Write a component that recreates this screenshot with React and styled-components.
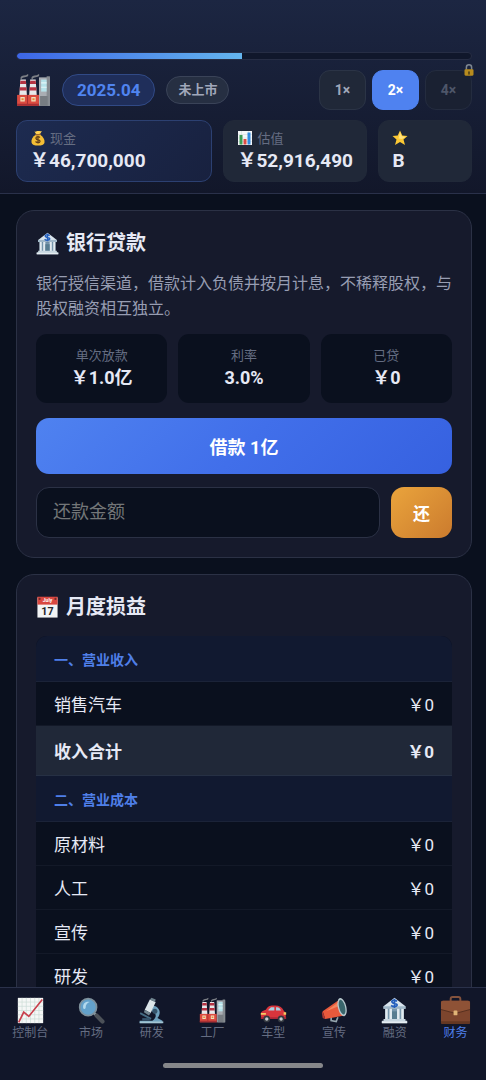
import React, { useState } from "react";
import styled, { createGlobalStyle } from "styled-components";

const GlobalStyle = createGlobalStyle`
  * {
    box-sizing: border-box;
  }

  body {
    margin: 0;
    background: #0a101e;
    color: #e6e9f5;
    font-family: Roboto, "Noto Sans CJK SC", sans-serif;
  }

  button, input {
    font-family: inherit;
  }

  svg {
    display: block;
    flex: none;
  }
`;
const Screen = styled.div`
  display: flex;
  flex-direction: column;
  height: 100vh;
  overflow: hidden;
`;
const Header = styled.header`
  flex: none;
  padding: 52px 14px 11px 16px;
  background: linear-gradient(180deg, #1c2642 0%, #12172a 100%);
  border-bottom: 1px solid #2a314a;
`;
const Progress = styled.div`
  height: 8px;
  border: 1px solid #262d44;
  border-radius: 4px;
  background: #10172b;
  overflow: hidden;
`;
const ProgressFill = styled.div`
  height: 100%;
  border-radius: 3px 0 0 3px;
  background: linear-gradient(90deg, #3d66e6, #64b5ee);
`;
const TopRow = styled.div`
  display: flex;
  align-items: center;
  gap: 11px;
  margin: 10px 0;
`;
const DatePill = styled.span`
  height: 32px;
  padding: 0 14px;
  line-height: 30px;
  border: 1px solid #314a86;
  border-radius: 16px;
  background: #1f2e5a;
  color: #5084f0;
  font-size: 17px;
  font-weight: 700;
`;
const StatusPill = styled.span`
  height: 28px;
  padding: 0 11px;
  line-height: 26px;
  border: 1px solid #3a4358;
  border-radius: 14px;
  background: #262f42;
  color: #a0a7ba;
  font-size: 13px;
  font-weight: 700;
`;
const Speeds = styled.div`
  display: flex;
  gap: 6px;
  margin-left: auto;
`;
const SpeedButton = styled.button`
  position: relative;
  width: 47px;
  height: 40px;
  padding: 0;
  border: 1px solid ${(p) => (p.$active ? "#4f82f0" : "#2b3446")};
  border-radius: 11px;
  background: ${(p) => (p.$active ? "#4f82f0" : "#202838")};
  color: ${(p) => (p.$active ? "#fff" : "#a0a7ba")};
  font-size: 14px;
  font-weight: 700;

  &:disabled {
    border-color: #242c3f;
    background: #1a2132;
    color: #4e5669;
  }
`;
const LockBadge = styled.span`
  position: absolute;
  top: -7px;
  right: -4px;
`;
const Assets = styled.div`
  display: grid;
  grid-template-columns: 210fr 154fr 100fr;
  gap: 11px;
`;
const Asset = styled.div`
  min-width: 0;
  height: 62px;
  padding: 6px 13px;
  border: 1px solid ${(p) => (p.$main ? "#2c4071" : "#212939")};
  border-radius: 11px;
  background: ${(p) => (p.$main ? "linear-gradient(135deg, #1d2b50, #18213f)" : "#202838")};
  white-space: nowrap;
`;
const AssetLabel = styled.div`
  display: flex;
  align-items: center;
  gap: 4px;
  height: 21px;
  color: #656d82;
  font-size: 13px;
`;
const AssetValue = styled.div`
  line-height: 26px;
  font-size: 19px;
  font-weight: 700;
`;
const Main = styled.main`
  flex: 1;
  min-height: 0;
  padding: 16px 14px 0 16px;
  overflow: hidden;
`;
const Card = styled.section`
  margin-bottom: 16px;
  padding: 19px;
  border: 1px solid #2b3145;
  border-radius: 18px;
  background: #161a2c;
`;
const CardTitle = styled.h2`
  display: flex;
  align-items: center;
  gap: 7px;
  margin: 0 0 15px;
  line-height: 26px;
  font-size: 20px;
  font-weight: 700;
`;
const Description = styled.p`
  margin: 0 0 13px;
  line-height: 25px;
  font-size: 16px;
  color: #979db2;
`;
const Stats = styled.div`
  display: grid;
  grid-template-columns: repeat(3, 1fr);
  gap: 11px;
  margin-bottom: 15px;
`;
const Stat = styled.div`
  padding: 12px 8px 13px;
  border-radius: 11px;
  background: #0a101e;
  text-align: center;
`;
const StatLabel = styled.div`
  line-height: 20px;
  font-size: 13px;
  color: #656d82;
`;
const StatValue = styled.div`
  line-height: 24px;
  font-size: 18px;
  font-weight: 700;
`;
const BorrowButton = styled.button`
  display: block;
  width: 100%;
  height: 56px;
  margin-bottom: 13px;
  border: 0;
  border-radius: 13px;
  background: linear-gradient(135deg, #4f82f0 0%, #416fea 50%, #3661e0 100%);
  color: #fff;
  font-size: 18px;
  font-weight: 700;
`;
const RepayRow = styled.form`
  display: flex;
  gap: 11px;
`;
const AmountInput = styled.input`
  flex: 1;
  min-width: 0;
  height: 51px;
  padding: 0 16px 2px;
  border: 1px solid #2b3145;
  border-radius: 13px;
  background: #0a101e;
  color: #e6e9f5;
  font-size: 18px;

  &::placeholder {
    color: #737678;
    opacity: 1;
  }
`;
const RepayButton = styled.button`
  width: 61px;
  height: 51px;
  padding: 0;
  border: 0;
  border-radius: 13px;
  background: linear-gradient(135deg, #eaa43c, #cb7b2e);
  color: #fff;
  font-size: 17px;
  font-weight: 700;
`;
const Report = styled.table`
  width: 100%;
  margin-top: 16px;
  border-spacing: 0;
  border-radius: 11px;
  background: #0a101e;
  overflow: hidden;
`;
const SectionHead = styled.th`
  height: 46px;
  padding: 0 18px;
  border-bottom: 1px solid #1b2338;
  background: #111930;
  color: #4f7fe8;
  font-size: 14px;
  font-weight: 700;
  text-align: left;
`;
const Line = styled.tr`
  background: ${(p) => (p.$total ? "#202838" : "#0a101e")};

  th, td {
    height: ${(p) => (p.$total ? "50px" : "44px")};
    padding: 0 18px;
    border-bottom: 1px solid ${(p) => (p.$total ? "#263044" : "#131928")};
    font-size: 17px;
    font-weight: ${(p) => (p.$total ? 700 : 400)};
    text-align: left;
  }

  td {
    text-align: right;
  }
`;
const Nav = styled.nav`
  flex: none;
  height: 93px;
  padding: 7px 0 11px;
  border-top: 1px solid #2a314a;
  background: #111629;
`;
const Tabs = styled.div`
  display: grid;
  grid-template-columns: repeat(8, 1fr);
`;
const Tab = styled.a`
  display: flex;
  flex-direction: column;
  align-items: center;
  color: ${(p) => (p.$active ? "#4f7fe8" : "#656d82")};
  font-size: 12px;
  line-height: 16px;
  text-decoration: none;
`;
const TabIcon = styled.span`
  display: flex;
  align-items: center;
  justify-content: center;
  height: 30px;
`;
const HomeBar = styled.div`
  width: 33%;
  height: 5px;
  margin: 22px auto 0;
  border-radius: 3px;
  background: #86878a;
`;

const drawings = {
  factory: (
    <>
      <path d="M4 5c0-2 2-3 5-3l2-1c1 2-1 3-4 3-1 0-2 1-2 2zM14 5c0-2 2-3 5-3l2-1c1 2-1 3-4 3-1 0-2 1-2 2z" fill="#7c7f86" />
      <path d="M4 6h5l1 15H3zM13 6h5l1 15h-7z" fill="#e8e8ea" />
      <path d="M4 7h5l.3 3H3.700zM3.500 13h6l.2 3H3.300zM13 7h5l.3 3h-5.600zM12.500 13h6l.2 3h-6.400z" fill="#b53343" />
      <path d="M21 4h10v26H21z" fill="#a9adb3" />
      <path d="M28 3h3v27h-3z" fill="#868b91" />
      <path d="M23 6h5v11h-5z" fill="#b5e2ea" />
      <path d="M23 9h5M23 13h5" stroke="#e3f5f7" />
      <path d="M22 21h7v9h-7z" fill="#777c82" />
      <path d="M1 20h20v10H1z" fill="#dc4c40" />
      <path d="M1 28h20v2H1zM10 20h1v9h-1z" fill="#a92f34" />
      <path d="M4 22h4v4H4zM14 22h4v4h-4z" fill="#f1dfbd" />
      <path d="M5 23h2v2H5zM15 23h2v2h-2z" fill="#e9883a" />
    </>
  ),
  money: (
    <>
      <path d="M12 9C5 13 2 19 3 25c1 5 6 6 13 6s12-1 13-6c1-6-3-12-9-16z" fill="#f4be35" />
      <path d="M12 8 9 3c3 1 4-1 7-1s5 1 8 0l-4 6z" fill="#ffd153" />
      <path d="M11 9c4 1 7 1 10-1" stroke="#a06b30" strokeWidth="3" fill="none" />
      <path d="M20 15c-4-3-9-1-8 2 1 4 9 2 8 6-1 3-6 3-9 0M16 12v15" stroke="#644019" strokeWidth="2.500" fill="none" />
    </>
  ),
  bars: (
    <>
      <path d="M2 2h28v28H2z" fill="#f5f7f8" />
      <path d="M2 9h28M2 16h28M2 23h28M9 2v28M23 2v28" stroke="#ccd8dc" />
      <path d="M5 10h6v19H5z" fill="#3d9c55" />
      <path d="M13 18h6v11h-6z" fill="#dc4b43" />
      <path d="M21 5h6v24h-6z" fill="#318be0" />
    </>
  ),
  star: (
    <>
      <path d="m16 1 4.500 10 10.500 1-8 7 3 11-10-6-10 6 3-11-8-7 10.500-1z" fill="#fcc934" />
      <path d="m16 4 3 8 8 2-7 4-7-1z" fill="#ffe17b" />
    </>
  ),
  lock: (
    <>
      <path d="M9 15V9c0-9 14-9 14 0v6" fill="none" stroke="#7e8791" strokeWidth="4" />
      <rect x="4" y="14" width="24" height="17" rx="3" fill="#b88c1e" />
      <path d="M16 19a3 3 0 0 1 2 5l1 4h-6l1-4a3 3 0 0 1 2-5" fill="#594617" />
    </>
  ),
  bank: (
    <>
      <path d="M3 11 16 1l13 10v3H3z" fill="#d8e4ed" />
      <path d="M3 11h26v3H3z" fill="#9fb7c8" />
      <path d="M5 14h22v13H5z" fill="#7797ad" />
      <path d="M5 14h3v13H5zM10 14h3v13h-3zM19 14h3v13h-3zM24 14h3v13h-3z" fill="#e2ebf0" />
      <path d="M13 17h6v10h-6z" fill="#587d91" />
      <path d="M3 26h26v2h2v3H1v-3h2z" fill="#c8d7e1" />
      <path d="M1 29h30v2H1z" fill="#e6edf2" />
      <path d="M19 5c-3-2-7-1-6 1 1 3 7 1 6 4-1 2-5 2-7 0M16 2v11" stroke="#245fbd" strokeWidth="2" fill="none" />
    </>
  ),
  calendar: (
    <>
      <path d="M2 2h28v28H2z" fill="#f3f4f5" />
      <path d="M2 1h28v11H2z" fill="#d94841" />
      <circle cx="5" cy="4" r="1.500" fill="#702d2c" />
      <circle cx="27" cy="4" r="1.500" fill="#702d2c" />
      <text x="16" y="9" textAnchor="middle" fontSize="7" fontWeight="700" fill="#fff">July</text>
      <text x="16" y="27" textAnchor="middle" fontSize="15" fontWeight="700" fill="#27282b">17</text>
    </>
  ),
  trend: (
    <>
      <path d="M1 1h30v30H1z" fill="#f5f7f6" />
      <path d="M6 1v30M11 1v30M16 1v30M21 1v30M26 1v30M1 6h30M1 11h30M1 16h30M1 21h30M1 26h30" stroke="#c9dbd5" strokeWidth=".8" />
      <path d="m2 30 6-12 6 5L30 3" fill="none" stroke="#c83e4b" strokeWidth="2" />
    </>
  ),
  search: (
    <>
      <path d="m19 19 4 4" stroke="#9eabb3" strokeWidth="3" />
      <path d="m22 22 7 7" stroke="#4c5158" strokeWidth="5" strokeLinecap="round" />
      <circle cx="12" cy="12" r="10" fill="#63a1cb" stroke="#7f919c" strokeWidth="2" />
      <path d="M6 12c0-5 4-7 8-6-3 1-5 3-5 7-1 2-3 1-3-1" fill="#b3d9ed" />
    </>
  ),
  microscope: (
    <>
      <path d="M18 10c8 2 10 9 5 15l6 3v3H2v-3h15c5-3 6-9-1-11z" fill="#6ea0bd" />
      <path d="M2 29h28v2H2z" fill="#a3c4d2" />
      <path d="m14 3 7 3-6 13-7-4z" fill="#dce5e9" />
      <path d="m16 1 5 2-1 3-6-3zM8 15l7 4-2 3-6-4z" fill="#70848f" />
      <path d="m3 18 13 7-1 2-13-7z" fill="#456b83" />
      <circle cx="20" cy="17" r="3" fill="#35536a" />
      <path d="M5 25h9v3H5z" fill="#34536c" />
    </>
  ),
  car: (
    <>
      <path d="M1 20c0-3 3-4 6-5 3-5 5-5 11-5 5 0 8 2 10 6 3 3 3 7 2 10H3c-2-1-2-4-2-6" fill="#d8353c" />
      <path d="m10 15 3-3h4v4h-7zM19 12c4 0 5 2 6 4h-6z" fill="#a9d1e1" />
      <path d="M1 19h6v2H1zM28 18h3v3h-3z" fill="#f7cb63" />
      <path d="M1 24h30v2H1z" fill="#a82736" />
      <circle cx="8" cy="26" r="4" fill="#343940" />
      <circle cx="25" cy="26" r="4" fill="#343940" />
      <circle cx="8" cy="26" r="2" fill="#c8ced2" />
      <circle cx="25" cy="26" r="2" fill="#c8ced2" />
    </>
  ),
  megaphone: (
    <>
      <path d="M12 23v5l6 1 2-5" stroke="#94a4ad" strokeWidth="2" fill="none" />
      <path d="M2 17 22 3l6 19-23 4z" fill="#e8593c" />
      <path d="m2 17 3 9-3-1-1-6z" fill="#ac3833" />
      <path d="M6 17 22 5l1 5z" fill="#f0855e" />
      <ellipse cx="25" cy="12" rx="5" ry="11" transform="rotate(-14 25 12)" fill="#b6c7cc" />
      <ellipse cx="25" cy="12" rx="3.500" ry="9" transform="rotate(-14 25 12)" fill="#39656b" />
    </>
  ),
  briefcase: (
    <>
      <path d="M11 7V4q0-2 2-2h6q2 0 2 2v3" fill="none" stroke="#84533d" strokeWidth="2" />
      <rect x="1" y="6" width="30" height="24" rx="2" fill="#7d452d" />
      <path d="M1 8q0-2 2-2h26q2 0 2 2v7l-15 4-15-4z" fill="#8e5236" />
      <path d="m1 15 15 4 15-4" fill="none" stroke="#57301f" />
      <path d="M1 27h30v2q-1 1-2 1H3q-1 0-2-1z" fill="#643722" />
      <rect x="14" y="16" width="4" height="5" rx="1" fill="#e1b577" />
    </>
  ),
};

function Icon({ name, size }) {
  return (
    <svg width={size} height={size} viewBox="0 0 32 32" aria-hidden="true">
      {drawings[name]}
    </svg>
  );
}

export default function App() {
  const [speed, setSpeed] = useState(2);
  const [amount, setAmount] = useState("");
  const progress = 49.5;

  const assets = [
    { icon: "money", label: "现金", value: "\uFFE546,700,000", main: true },
    { icon: "bars", label: "估值", value: "\uFFE552,916,490" },
    { icon: "star", label: "", value: "B" },
  ];

  const stats = [
    { label: "单次放款", value: "\uFFE51.0亿" },
    { label: "利率", value: "3.0%" },
    { label: "已贷", value: "\uFFE50" },
  ];

  const report = [
    {
      title: "一、营业收入",
      lines: [{ name: "销售汽车" }, { name: "收入合计", total: true }],
    },
    {
      title: "二、营业成本",
      lines: [
        { name: "原材料" },
        { name: "人工" },
        { name: "宣传" },
        { name: "研发" },
      ],
    },
  ];

  const tabs = [
    { icon: "trend", label: "控制台" },
    { icon: "search", label: "市场" },
    { icon: "microscope", label: "研发" },
    { icon: "factory", label: "工厂" },
    { icon: "car", label: "车型" },
    { icon: "megaphone", label: "宣传" },
    { icon: "bank", label: "融资" },
    { icon: "briefcase", label: "财务", active: true },
  ];

  return (
    <Screen>
      <GlobalStyle />
      <Header>
        <Progress>
          <ProgressFill style={{ width: `${progress}%` }} />
        </Progress>
        <TopRow>
          <Icon name="factory" size={35} />
          <DatePill>2025.04</DatePill>
          <StatusPill>未上市</StatusPill>
          <Speeds>
            {[1, 2, 4].map((s) => (
              <SpeedButton
                key={s}
                type="button"
                $active={speed === s}
                disabled={s === 4}
                onClick={() => setSpeed(s)}
              >
                {s}×
                {s === 4 && (
                  <LockBadge>
                    <Icon name="lock" size={12} />
                  </LockBadge>
                )}
              </SpeedButton>
            ))}
          </Speeds>
        </TopRow>
        <Assets>
          {assets.map((asset) => (
            <Asset key={asset.icon} $main={asset.main}>
              <AssetLabel>
                <Icon name={asset.icon} size={16} />
                {asset.label}
              </AssetLabel>
              <AssetValue>{asset.value}</AssetValue>
            </Asset>
          ))}
        </Assets>
      </Header>
      <Main>
        <Card>
          <CardTitle>
            <Icon name="bank" size={23} />
            银行贷款
          </CardTitle>
          <Description>
            银行授信渠道，借款计入负债并按月计息，不稀释股权，与股权融资相互独立。
          </Description>
          <Stats>
            {stats.map((stat) => (
              <Stat key={stat.label}>
                <StatLabel>{stat.label}</StatLabel>
                <StatValue>{stat.value}</StatValue>
              </Stat>
            ))}
          </Stats>
          <BorrowButton type="button">借款 1亿</BorrowButton>
          <RepayRow onSubmit={(e) => e.preventDefault()}>
            <AmountInput
              aria-label="还款金额"
              placeholder="还款金额"
              value={amount}
              onChange={(e) => setAmount(e.target.value)}
            />
            <RepayButton type="submit">还</RepayButton>
          </RepayRow>
        </Card>
        <Card>
          <CardTitle>
            <Icon name="calendar" size={23} />
            月度损益
          </CardTitle>
          <Report>
            {report.map((section) => (
              <tbody key={section.title}>
                <tr>
                  <SectionHead colSpan={2}>{section.title}</SectionHead>
                </tr>
                {section.lines.map((line) => (
                  <Line key={line.name} $total={line.total}>
                    <th scope="row">{line.name}</th>
                    <td>{"\uFFE50"}</td>
                  </Line>
                ))}
              </tbody>
            ))}
          </Report>
        </Card>
      </Main>
      <Nav>
        <Tabs>
          {tabs.map((tab) => (
            <Tab key={tab.label} href="#" $active={tab.active}>
              <TabIcon>
                <Icon name={tab.icon} size={tab.active ? 31 : 27} />
              </TabIcon>
              {tab.label}
            </Tab>
          ))}
        </Tabs>
        <HomeBar />
      </Nav>
    </Screen>
  );
}
